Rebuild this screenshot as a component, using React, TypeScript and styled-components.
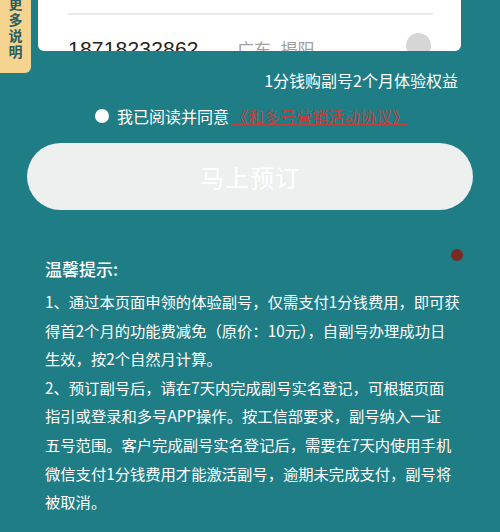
import React from 'react';
import styled, { createGlobalStyle } from 'styled-components';

const GlobalStyle = createGlobalStyle`
  html, body {
    margin: 0;
    padding: 0;
    background: #1f7d86;
    overflow: hidden;
  }
  body {
    font-family: "Liberation Sans", "Noto Sans CJK SC", sans-serif;
  }
`;

const Page = styled.div`
  width: 500px;
  height: 532px;
  background: #1f7d86;
  overflow: hidden;
  position: relative;
`;

const Scroller = styled.div`
  margin-top: -40px;
  display: flex;
  flex-direction: column;
`;

const Card = styled.div`
  margin: 0 39px 0 38px;
  background: #ffffff;
  border-radius: 0 0 6px 6px;
  height: 91px;
  overflow: hidden;
  padding: 0 28px 0 30px;
`;

const Row = styled.div<{ $top?: boolean }>`
  display: flex;
  align-items: center;
  height: 55px;
  border-bottom: ${p => (p.$top ? '2px solid #ebebeb' : 'none')};
  box-sizing: border-box;
  padding-top: ${p => (p.$top ? '0' : '12px')};
`;

const Number = styled.span`
  font-size: 21px;
  color: #222;
  width: 169px;
  letter-spacing: 0.2px;
`;

const Region = styled.span`
  font-size: 17px;
  color: #a0a0a0;
  flex: 1;
`;

const Dot = styled.span`
  width: 25px;
  height: 25px;
  border-radius: 50%;
  background: #d6d6d6;
  margin-right: 2px;
  margin-top: -6px;
`;

const Tab = styled.div`
  position: absolute;
  left: 0;
  top: -8px;
  width: 31px;
  height: 81px;
  box-sizing: border-box;
  padding-top: 3px;
  background: #f4d48f;
  border-radius: 0 0 6px 0;
  display: flex;
  flex-direction: column;
  align-items: center;
  color: #2c5b60;
  font-family: "Noto Sans CJK SC", sans-serif;
  font-weight: 700;
  font-size: 14px;
  line-height: 16px;
`;

const TabChar = styled.span`
  display: block;
  height: 16px;
`;

const Offer = styled.div`
  align-self: flex-end;
  margin: 18px 42px 0 0;
  color: #ffffff;
  font-family: "Noto Sans CJK SC", sans-serif;
  font-size: 16px;
  line-height: 22px;
`;

const Agree = styled.div`
  display: flex;
  align-items: center;
  margin: 14px 0 0 95px;
  font-family: "Noto Sans CJK SC", sans-serif;
  font-size: 16px;
  line-height: 22px;
  color: #ffffff;
`;

const Radio = styled.span`
  width: 14px;
  height: 14px;
  border-radius: 50%;
  background: #ffffff;
  margin-right: 8px;
`;

const Link = styled.a`
  color: #c0403a;
  text-decoration: underline;
  margin-left: 3px;
`;

const Button = styled.button`
  margin: 16px 27px 0 27px;
  height: 67px;
  border: none;
  border-radius: 34px;
  background: #eeefef;
  color: #ffffff;
  font-family: "Noto Sans CJK SC", sans-serif;
  font-size: 24px;
  letter-spacing: 1px;
`;

const RedDot = styled.span`
  position: absolute;
  left: 451px;
  top: 249px;
  width: 12px;
  height: 12px;
  border-radius: 50%;
  background: #7b2a24;
`;

const Tips = styled.div`
  margin: 47px 40px 0 45px;
  color: #ffffff;
  font-family: "Noto Sans CJK SC", sans-serif;
`;

const TipsTitle = styled.div`
  font-size: 17px;
  font-weight: 500;
  line-height: 24px;
  margin-bottom: 6px;
`;

const Para = styled.p`
  margin: 0;
  font-size: 15.3px;
  line-height: 28.6px;
  white-space: nowrap;
`;

export default function App() {
  return (
    <Page>
      <GlobalStyle />
      <Scroller>
        <Card>
          <Row $top />
          <Row>
            <Number>18718232862</Number>
            <Region>广东&nbsp;&nbsp;揭阳</Region>
            <Dot />
          </Row>
        </Card>
        <Offer>1分钱购副号2个月体验权益</Offer>
        <Agree>
          <Radio />
          我已阅读并同意
          <Link>《和多号营销活动协议》</Link>
        </Agree>
        <Button>马上预订</Button>
        <Tips>
          <TipsTitle>温馨提示:</TipsTitle>
          <Para>
            1、通过本页面申领的体验副号，仅需支付1分钱费用，即可获
            <br />
            得首2个月的功能费减免（原价：10元），自副号办理成功日
            <br />
            生效，按2个自然月计算。
          </Para>
          <Para>
            2、预订副号后，请在7天内完成副号实名登记，可根据页面
            <br />
            指引或登录和多号APP操作。按工信部要求，副号纳入一证
            <br />
            五号范围。客户完成副号实名登记后，需要在7天内使用手机
            <br />
            微信支付1分钱费用才能激活副号，逾期未完成支付，副号将
            <br />
            被取消。
          </Para>
        </Tips>
      </Scroller>
      <Tab>
        <TabChar>更</TabChar>
        <TabChar>多</TabChar>
        <TabChar>说</TabChar>
        <TabChar>明</TabChar>
      </Tab>
      <RedDot />
    </Page>
  );
}
